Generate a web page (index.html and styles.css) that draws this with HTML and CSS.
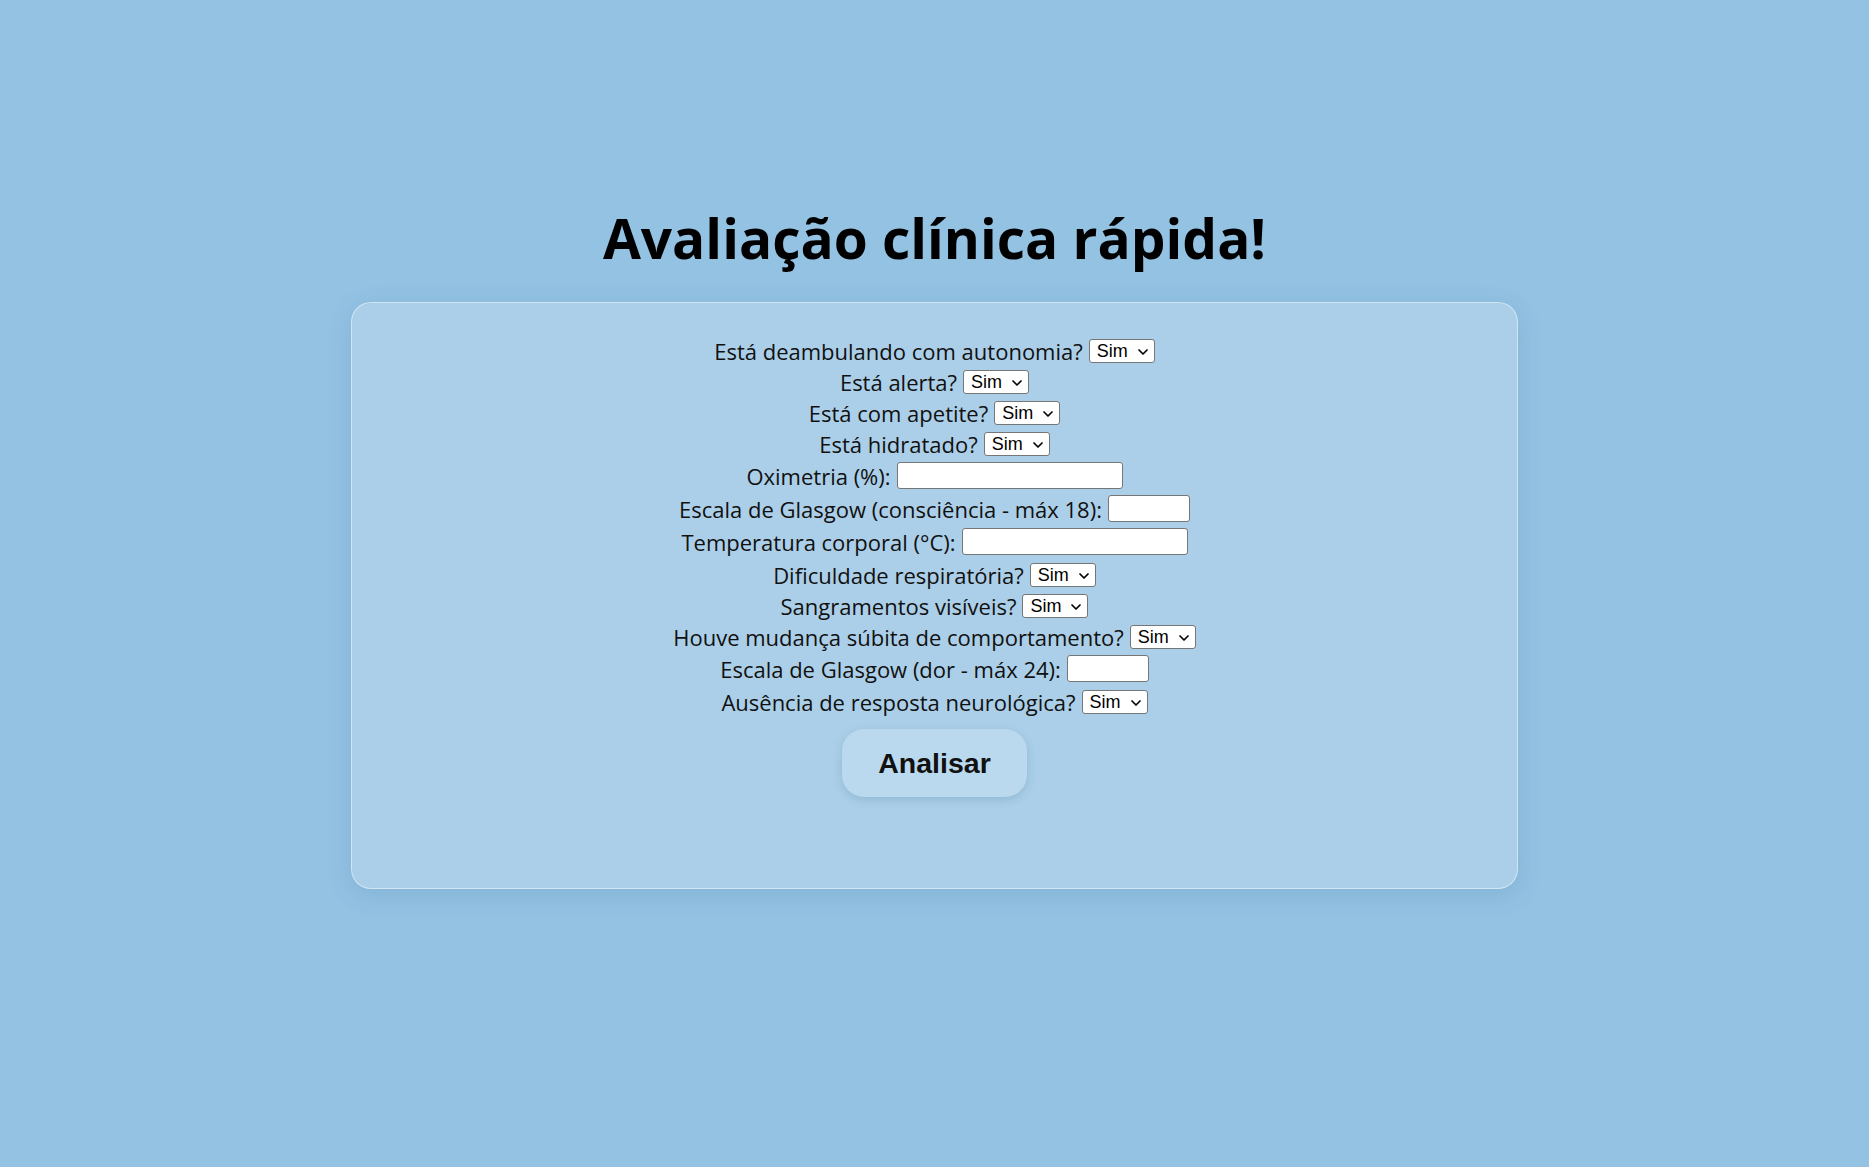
FILE: index.html
```html
<!DOCTYPE html>
<html lang="pt-BR">
<head>
<meta charset="utf-8">
<title>Avaliação clínica rápida!</title>
<link rel="stylesheet" href="styles.css">
</head>
<body>
<h1 class="title">Avaliação clínica rápida!</h1>
<form class="card">
  <div class="row"><label>Está deambulando com autonomia?</label><span class="sel"><select><option>Sim</option><option>Não</option></select><svg class="chev" viewBox="0 0 10 6"><path d="M1 1 L5 5 L9 1"/></svg></span></div>
  <div class="row"><label>Está alerta?</label><span class="sel"><select><option>Sim</option><option>Não</option></select><svg class="chev" viewBox="0 0 10 6"><path d="M1 1 L5 5 L9 1"/></svg></span></div>
  <div class="row"><label>Está com apetite?</label><span class="sel"><select><option>Sim</option><option>Não</option></select><svg class="chev" viewBox="0 0 10 6"><path d="M1 1 L5 5 L9 1"/></svg></span></div>
  <div class="row"><label>Está hidratado?</label><span class="sel"><select><option>Sim</option><option>Não</option></select><svg class="chev" viewBox="0 0 10 6"><path d="M1 1 L5 5 L9 1"/></svg></span></div>
  <div class="row row-input"><label>Oximetria (%):</label><input type="text" class="wide"></div>
  <div class="row row-input"><label>Escala de Glasgow (consciência - máx 18):</label><input type="text" class="narrow"></div>
  <div class="row row-input"><label>Temperatura corporal (°C):</label><input type="text" class="wide"></div>
  <div class="row after-input"><label>Dificuldade respiratória?</label><span class="sel"><select><option>Sim</option><option>Não</option></select><svg class="chev" viewBox="0 0 10 6"><path d="M1 1 L5 5 L9 1"/></svg></span></div>
  <div class="row"><label>Sangramentos visíveis?</label><span class="sel"><select><option>Sim</option><option>Não</option></select><svg class="chev" viewBox="0 0 10 6"><path d="M1 1 L5 5 L9 1"/></svg></span></div>
  <div class="row"><label>Houve mudança súbita de comportamento?</label><span class="sel"><select><option>Sim</option><option>Não</option></select><svg class="chev" viewBox="0 0 10 6"><path d="M1 1 L5 5 L9 1"/></svg></span></div>
  <div class="row row-input"><label>Escala de Glasgow (dor - máx 24):</label><input type="text" class="narrow"></div>
  <div class="row after-input"><label>Ausência de resposta neurológica?</label><span class="sel"><select><option>Sim</option><option>Não</option></select><svg class="chev" viewBox="0 0 10 6"><path d="M1 1 L5 5 L9 1"/></svg></span></div>
  <div class="actions"><button type="button" class="btn">Analisar</button></div>
</form>
</body>
</html>
```
FILE: styles.css
```css
html, body {
  margin: 0;
  padding: 0;
}
body {
  background: #93c2e3;
  min-height: 1167px;
  font-family: "Open Sans", "Noto Sans", sans-serif;
  color: #111;
  padding-top: 210px;
  box-sizing: border-box;
}
.title {
  margin: 0 0 37px 0;
  font-family: "Open Sans", sans-serif;
  font-weight: 700;
  font-size: 55px;
  line-height: 55px;
  text-align: center;
  color: #000;
}
.card {
  width: 1167px;
  margin: 0 auto;
  box-sizing: border-box;
  background: #abcfe8;
  border: 1px solid rgba(255, 255, 255, 0.45);
  border-radius: 20px;
  padding: 32px 20px 91px;
  box-shadow: 0 6px 24px rgba(60, 110, 150, 0.18);
}
.row {
  display: flex;
  justify-content: center;
  align-items: center;
  gap: 6px;
  height: 31px;
  font-size: 22px;
  color: #111;
}
.row-input {
  height: 33px;
}
.after-input {
  margin-top: 1px;
}
.sel {
  position: relative;
  display: inline-flex;
}
select {
  -webkit-appearance: none;
  appearance: none;
  box-sizing: border-box;
  font-family: Arial, "Liberation Sans", sans-serif;
  font-size: 18px;
  width: 66px;
  height: 24px;
  border: 1px solid #767676;
  border-radius: 3px;
  background: #fff;
  color: #000;
  padding: 0 0 0 7px;
  outline: none;
}
.chev {
  position: absolute;
  right: 7px;
  top: 10px;
  width: 10px;
  height: 6px;
  pointer-events: none;
  fill: none;
  stroke: #000;
  stroke-width: 1.7;
  stroke-linecap: round;
  stroke-linejoin: round;
  overflow: visible;
}
input {
  box-sizing: border-box;
  height: 27px;
  border: 1px solid #767676;
  border-radius: 3px;
  background: #fff;
  padding: 1px 3px;
  font-size: 17.8px;
}
.wide {
  width: 226px;
}
.narrow {
  width: 82px;
}
.actions {
  display: flex;
  justify-content: center;
  margin-top: 12px;
}
.btn {
  width: 185px;
  height: 68px;
  border: none;
  border-radius: 22px;
  background: #bbd9ee;
  font-family: Arial, "Liberation Sans", sans-serif;
  font-weight: 700;
  font-size: 28.5px;
  color: #111;
  box-shadow: 0 3px 10px rgba(40, 90, 130, 0.18);
  cursor: pointer;
}
```
